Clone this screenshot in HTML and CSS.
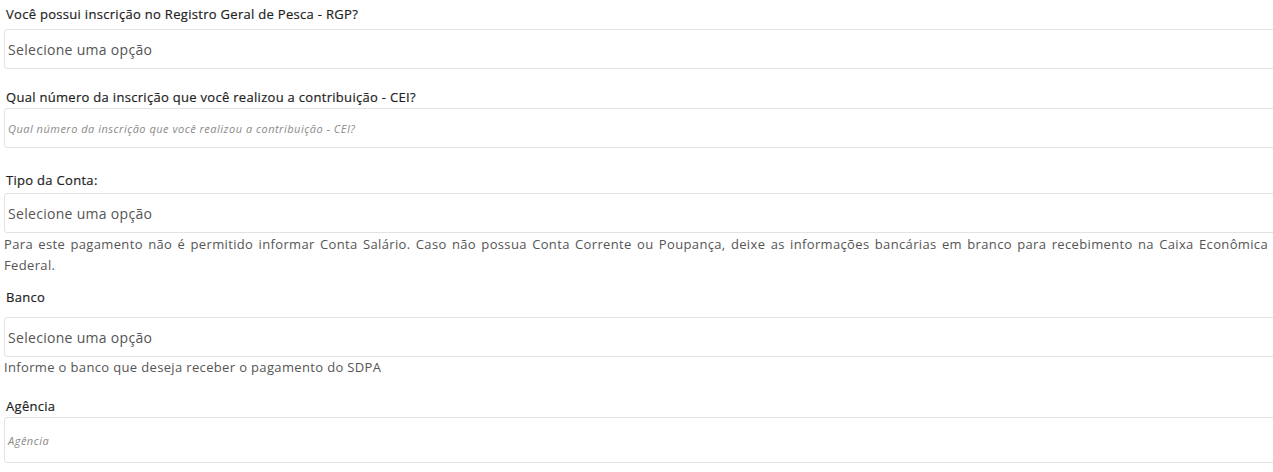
FILE: index.html
```html
<!DOCTYPE html>
<html lang="pt-BR">
<head>
<meta charset="utf-8">
<title>Formulário</title>
<link rel="stylesheet" href="styles.css">
</head>
<body>
<form class="form">
  <div class="group g1">
    <label class="label">Você possui inscrição no Registro Geral de Pesca - RGP?</label>
    <div class="control select">Selecione uma opção</div>
  </div>
  <div class="group g2">
    <label class="label">Qual número da inscrição que você realizou a contribuição - CEI?</label>
    <div class="control input"><span class="ph">Qual número da inscrição que você realizou a contribuição - CEI?</span></div>
  </div>
  <div class="group g3">
    <label class="label">Tipo da Conta:</label>
    <div class="control select">Selecione uma opção</div>
    <p class="help">Para este pagamento não é permitido informar Conta Salário. Caso não possua Conta Corrente ou Poupança, deixe as informações bancárias em branco para recebimento na Caixa Econômica Federal.</p>
  </div>
  <div class="group g4">
    <label class="label">Banco</label>
    <div class="control select">Selecione uma opção</div>
    <p class="help">Informe o banco que deseja receber o pagamento do SDPA</p>
  </div>
  <div class="group g5">
    <label class="label">Agência</label>
    <div class="control input tall"><span class="ph">Agência</span></div>
  </div>
</form>
</body>
</html>
```

FILE: styles.css
```css
html, body {
  margin: 0;
  padding: 0;
  background: #ffffff;
  overflow: hidden;
}
body {
  font-family: "Open Sans", "Noto Sans", sans-serif;
  color: #333;
}
.form {
  width: 1280px;
  margin-left: 4px;
  padding-top: 3px;
  display: flex;
  flex-direction: column;
}
.group {
  display: flex;
  flex-direction: column;
}
.label {
  display: block;
  font-size: 13px;
  line-height: 22px;
  font-weight: 500;
  letter-spacing: 0.3px;
  color: #1f1f1f;
  padding-left: 2px;
  -webkit-text-stroke: 0.2px #1f1f1f;
}
.control {
  box-sizing: border-box;
  height: 40px;
  border: 1px solid #e3e3e3;
  border-radius: 3px;
  padding-left: 3px;
  display: flex;
  align-items: center;
  font-size: 14px;
  letter-spacing: 0.3px;
  color: #555;
}
.control.tall {
  height: 46px;
}
.ph {
  font-style: italic;
  font-size: 11px;
  letter-spacing: 0.5px;
  color: #8a8a8a;
}
.help {
  margin: 1px 16px 0 0;
  font-size: 13px;
  line-height: 21px;
  letter-spacing: 0.35px;
  text-align: justify;
  color: #555;
}
.g1 { margin-bottom: 17px; }
.g1 .label { margin-bottom: 4px; }
.g2 { margin-bottom: 21px; }
.g3 { margin-bottom: 10px; }
.g3 .label { margin-bottom: 2px; }
.g4 { margin-bottom: 17px; }
.g4 .label { margin-bottom: 9px; }
.g4 .help { margin-top: 0; }
```
